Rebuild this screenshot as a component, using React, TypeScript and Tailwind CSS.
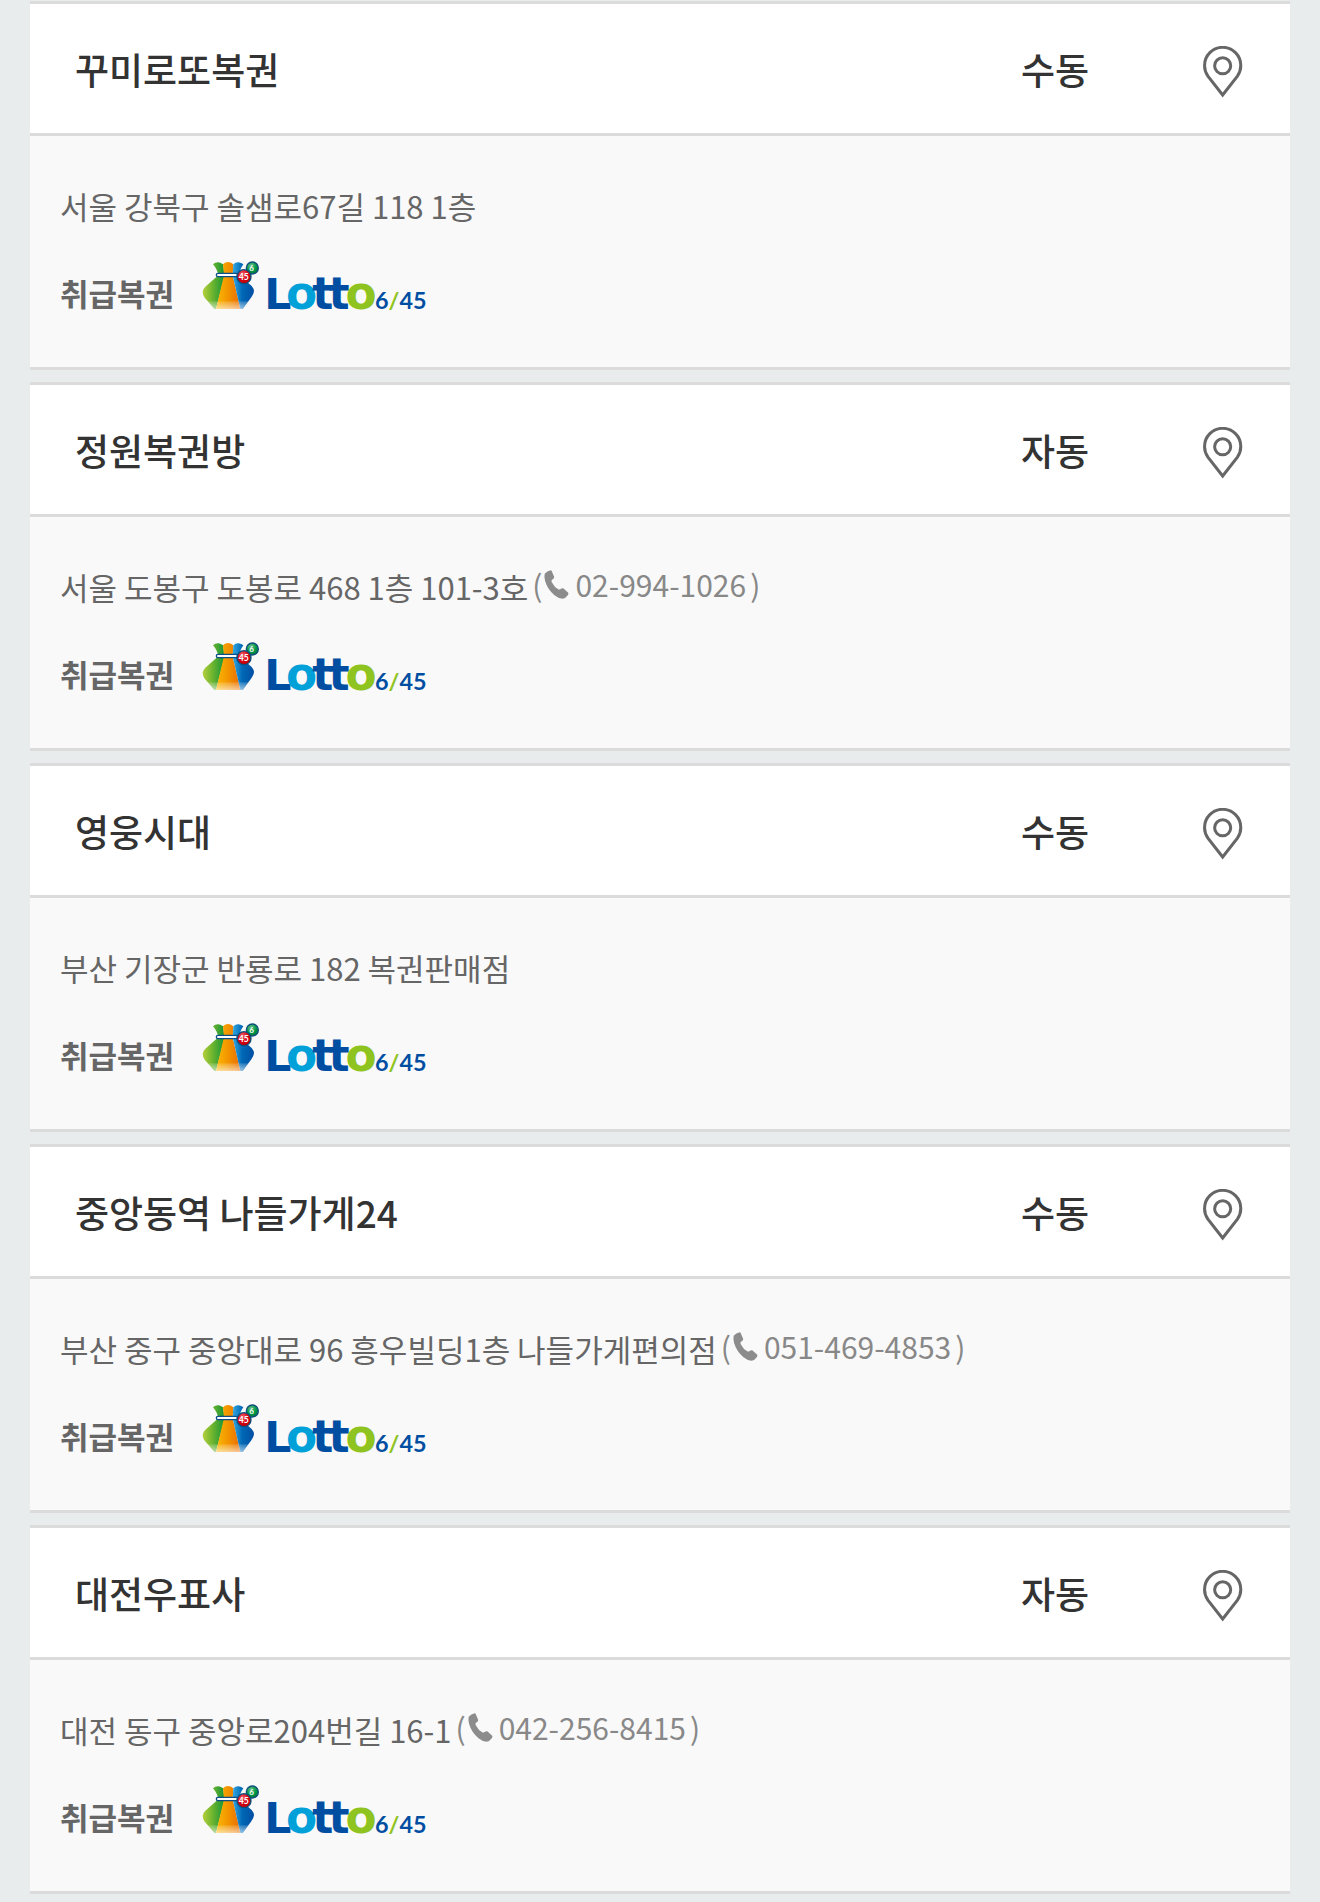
type Store = {
  name: string;
  type: string;
  address: string;
  phone?: string;
};

const stores: Store[] = [
  { name: '꾸미로또복권', type: '수동', address: '서울 강북구 솔샘로67길 118 1층' },
  { name: '정원복권방', type: '자동', address: '서울 도봉구 도봉로 468 1층 101-3호', phone: '02-994-1026' },
  { name: '영웅시대', type: '수동', address: '부산 기장군 반룡로 182 복권판매점' },
  { name: '중앙동역 나들가게24', type: '수동', address: '부산 중구 중앙대로 96 흥우빌딩1층 나들가게편의점', phone: '051-469-4853' },
  { name: '대전우표사', type: '자동', address: '대전 동구 중앙로204번길 16-1', phone: '042-256-8415' },
];

function PinIcon() {
  return (
    <svg viewBox="129 137 118 155" className="h-[52px] w-10" fill="none" stroke="#666" aria-hidden="true">
      <path strokeWidth="9" d="M187 283 L143 227 Q133 212 133 195 A54 54 0 0 1 241 195 Q241 212 231 227 Z" />
      <circle cx="187" cy="196" r="24" strokeWidth="9" />
    </svg>
  );
}

function PhoneIcon() {
  return (
    <svg viewBox="119 92 74 86" className="h-[29px] w-[25px]" fill="#8c8c8c" aria-hidden="true">
      <path d="M121 103 Q128 95 139 93 Q142 94 143 98 L149 112 Q150 116 146 119 L142 122 Q140 125 142 128 Q150 143 161 149 Q164 151 167 149 L171 147 Q174 145 177 147 L190 159 Q193 162 190 166 Q183 176 174 177 Q162 177 150 167 Q129 149 122 124 Q119 112 121 103 Z" />
    </svg>
  );
}

function LottoLogo() {
  return (
    <svg viewBox="30 33 678 168" className="h-14 w-[226px] overflow-visible" role="img" aria-label="Lotto 6/45">
      <defs>
        <linearGradient id="bagGreen" x1="0" x2="1" y1="0" y2="0">
          <stop offset="0" stopColor="#b5cf3c" />
          <stop offset="0.45" stopColor="#6db52f" />
          <stop offset="1" stopColor="#159437" />
        </linearGradient>
        <linearGradient id="bagOrange" x1="0" x2="1" y1="0" y2="0">
          <stop offset="0" stopColor="#fcb800" />
          <stop offset="0.45" stopColor="#f39800" />
          <stop offset="1" stopColor="#ea6c00" />
        </linearGradient>
        <linearGradient id="bagBlue" x1="0" x2="1" y1="0" y2="0">
          <stop offset="0" stopColor="#35a8e0" />
          <stop offset="0.45" stopColor="#0068b6" />
          <stop offset="1" stopColor="#004ea2" />
        </linearGradient>
        <linearGradient id="bagFade" x1="0" x2="0" y1="0" y2="1">
          <stop offset="0" stopColor="#fff" stopOpacity="0.15" />
          <stop offset="1" stopColor="#fff" stopOpacity="0.6" />
        </linearGradient>
        <radialGradient id="ballRed" cx="0.4" cy="0.3" r="0.7">
          <stop offset="0" stopColor="#f0606a" />
          <stop offset="0.6" stopColor="#d7000f" />
          <stop offset="1" stopColor="#b8000c" />
        </radialGradient>
        <radialGradient id="ballGreen" cx="0.4" cy="0.3" r="0.7">
          <stop offset="0" stopColor="#6cc08b" />
          <stop offset="0.6" stopColor="#009944" />
          <stop offset="1" stopColor="#007a3c" />
        </radialGradient>
      </defs>
      <path fill="url(#bagGreen)" d="M69 43 Q76 36 86 37 Q93 38 99 43 L104 76 L78 177 L74 177 L44 143 Q38 134 38 125 Q39 117 46 110 L85 76 Q82 58 69 43 Z" />
      <path fill="url(#bagOrange)" d="M99 43 Q105 36 115 36 Q124 37 130 43 L128 76 L151 177 L78 177 L102 76 Z" />
      <path fill="url(#bagBlue)" d="M130 43 Q137 36 146 37 Q154 38 160 43 Q149 58 148 76 L185 108 Q192 116 192 124 Q191 133 184 142 L158 177 L151 177 L128 76 Z" />
      <path fill="url(#bagFade)" d="M54 154 L175 154 L158 177 L74 177 Z" />
      <rect x="79" y="70" width="64" height="10" rx="5" fill="#fff" stroke="#0b4f88" strokeWidth="4" />
      <circle cx="187" cy="54" r="18" fill="url(#ballGreen)" stroke="#0d4f7c" strokeWidth="4" />
      <circle cx="162" cy="80" r="21" fill="url(#ballRed)" stroke="#0d4f7c" strokeWidth="4" />
      <g fontFamily="Lato, sans-serif" fontWeight="700" textAnchor="middle" fill="#fff">
        <text x="185" y="62" fontSize="24">6</text>
        <text x="161" y="89" fontSize="26">45</text>
      </g>
      <g fontFamily="DejaVu Sans, sans-serif" fontWeight="700">
        <text x="223" y="177" fontSize="128" fill="#004ea2">L</text>
        <text x="335" y="176" textAnchor="middle" fontSize="136" fill="#00a0d9">o</text>
        <text x="398" y="177" textAnchor="middle" fontSize="132" fill="#004ea2">t</text>
        <text x="447" y="177" textAnchor="middle" fontSize="132" fill="#004ea2">t</text>
        <text x="513" y="176" textAnchor="middle" fontSize="136" fill="#8fc31f">o</text>
      </g>
      <text x="555" y="177" fontFamily="Lato, sans-serif" fontWeight="700" fontSize="70" fill="#004ea2">
        6<tspan fill="#8fc31f">/</tspan>45
      </text>
    </svg>
  );
}

function StoreCard({ store }: { store: Store }) {
  return (
    <li className="border-y-3 border-[#dbdbdb] bg-[#f9f9f9]">
      <div className="flex h-33 items-center border-b-3 border-[#dbdbdb] bg-white text-[37px] leading-[54px] font-medium text-[#333]">
        <h2 className="flex-1 pl-[45px]">{store.name}</h2>
        <span className="w-[200px] text-center">{store.type}</span>
        <div className="flex w-[135px] justify-center pt-1.5">
          <button type="button" aria-label={`${store.name} 위치 보기`}>
            <PinIcon />
          </button>
        </div>
      </div>
      <div className="px-[30px] pt-[47px] pb-[50px] text-[31px] leading-[46px] text-[#666]">
        <p className="flex items-start">
          <span>{store.address}</span>
          {store.phone && (
            <span className="-mt-[3px] ml-1 flex items-center text-[30px] text-[#888]">
              <span>(</span>
              <a href={`tel:${store.phone}`} className="mr-1 ml-0.5 flex items-center gap-1.5">
                <PhoneIcon />
                {store.phone}
              </a>
              <span>)</span>
            </span>
          )}
        </p>
        <div className="mt-8 flex items-center gap-[26px]">
          <strong className="pt-2 font-bold">취급복권</strong>
          <LottoLogo />
        </div>
      </div>
    </li>
  );
}

export default function App() {
  return (
    <main className="min-h-screen bg-[#e8eced] px-[30px] pt-px pb-[7px] font-['Noto_Sans_CJK_KR',sans-serif]">
      <ul className="flex flex-col gap-3">
        {stores.map((store) => (
          <StoreCard key={store.name} store={store} />
        ))}
      </ul>
    </main>
  );
}
